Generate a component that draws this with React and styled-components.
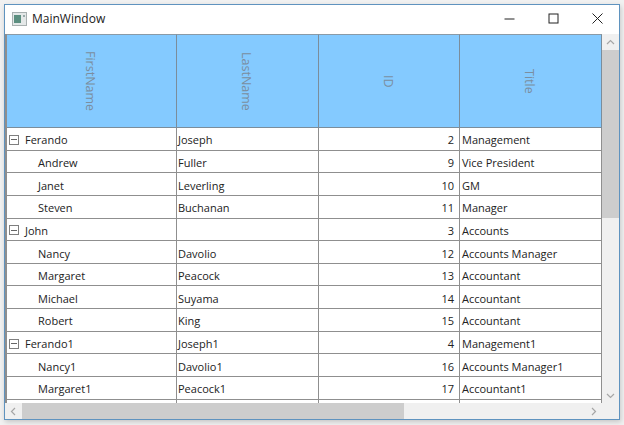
import React from "react";
import styled, { createGlobalStyle } from "styled-components";

const Global = createGlobalStyle`
  html, body { margin: 0; padding: 0; width: 624px; height: 425px; overflow: hidden; background: #f1f1f1; }
  body { font-family: "Open Sans", "Noto Sans", sans-serif; }
`;
const Frame = styled.div`
  width: 624px; height: 425px; box-sizing: border-box; padding: 4px 4px 5px 4px;
`;
const Win = styled.div`
  width: 616px; height: 416px; box-sizing: border-box; border: 1.5px solid #5f93bf;
  background: #fff; display: flex; flex-direction: column; box-shadow: 1px 2px 5px rgba(0,0,0,.18);
`;
const TitleBar = styled.div`
  height: 29px; flex: none; display: flex; align-items: center; padding-left: 7px; padding-bottom: 2px; box-sizing: border-box; background: #fff;
`;
const AppIcon = styled.svg` width: 15px; height: 14px; margin-right: 5px; flex: none; `;
const TitleText = styled.div` font-size: 12px; color: #1a1a1a; flex: 1; `;
const WinBtn = styled.div`
  width: 44px; height: 27px; display: flex; align-items: center; justify-content: center; flex: none;
`;
const Body = styled.div` flex: 1; min-height: 0; display: grid; grid-template-columns: 597px 1fr; grid-template-rows: 1fr 16px; `;
const GridArea = styled.div` overflow: hidden; min-height: 0; border-left: 2px solid #8e8e8e; `;
const Table = styled.div`
  display: grid; grid-template-columns: 170px 142px 141px 142px;
`;
const HeadCell = styled.div`
  height: 94px; box-sizing: border-box; background: #84caff; border-top: 1px solid #8a9aa6; border-right: 1px solid #7b8d9b; border-bottom: 1px solid #7b8d9b;
  display: flex; align-items: center; justify-content: center; padding-right: 2px;
`;
const HeadText = styled.span`
  writing-mode: vertical-rl; font-size: 12.5px; color: #7b8ea0;
`;
const Cell = styled.div`
  height: 22.65px; box-sizing: border-box; border-right: 1px solid #8f8f8f; border-bottom: 1px solid #8f8f8f;
  font-size: 11px; color: #222; display: flex; align-items: center; white-space: nowrap; overflow: hidden;
  padding-top: 2px; background: #fff;
  justify-content: ${p => (p.$right ? "flex-end" : "flex-start")};
  padding-left: ${p => (p.$child ? "31px" : p.$tight ? "1px" : p.$right ? "0" : "2px")};
  padding-right: ${p => (p.$right ? "5px" : "0")};
`;
const Toggle = styled.span`
  width: 10px; height: 10px; box-sizing: border-box; border: 1px solid #7f7f7f; margin-right: 6px; position: relative; flex: none;
  &::after { content: ""; position: absolute; left: 1px; right: 1px; top: 3.5px; height: 1px; background: #666; }
`;
const VBar = styled.div` background: #f0f0f0; display: flex; flex-direction: column; `;
const HBar = styled.div` background: #f0f0f0; display: flex; `;
const Arrow = styled.div` flex: none; width: ${p => p.$w}px; height: ${p => p.$h}px; display: flex; align-items: center; justify-content: center; `;
const Corner = styled.div` background: #f0f0f0; `;
const VThumb = styled.div` height: 168px; background: #cdcdcd; flex: none; `;
const HThumb = styled.div` width: 382px; background: #cdcdcd; flex: none; `;
const Spacer = styled.div` flex: 1; `;

const rows = [
  ["Ferando", "Joseph", 2, "Management", 0],
  ["Andrew", "Fuller", 9, "Vice President", 1],
  ["Janet", "Leverling", 10, "GM", 1],
  ["Steven", "Buchanan", 11, "Manager", 1],
  ["John", "", 3, "Accounts", 0],
  ["Nancy", "Davolio", 12, "Accounts Manager", 1],
  ["Margaret", "Peacock", 13, "Accountant", 1],
  ["Michael", "Suyama", 14, "Accountant", 1],
  ["Robert", "King", 15, "Accountant", 1],
  ["Ferando1", "Joseph1", 4, "Management1", 0],
  ["Nancy1", "Davolio1", 16, "Accounts Manager1", 1],
  ["Margaret1", "Peacock1", 17, "Accountant1", 1],
  ["", "", "", "", 1],
];

const Chev = ({ d }) => (
  <svg width="9" height="9" viewBox="0 0 9 9" fill="none" stroke="#a6a6a6" strokeWidth="1.2"><path d={d} /></svg>
);

export default function App() {
  return (
    <Frame>
      <Global />
      <Win>
        <TitleBar>
          <AppIcon viewBox="0 0 15 14">
            <rect x="0.5" y="0.5" width="14" height="13" fill="#e4e8e8" stroke="#a8b0b0" />
            <rect x="2" y="3" width="7" height="8" fill="#5c8f80" />
            <rect x="11" y="3" width="2" height="2" fill="#9aa" />
          </AppIcon>
          <TitleText>MainWindow</TitleText>
          <WinBtn><svg width="11" height="11" viewBox="0 0 11 11"><path d="M0.5 6H10.5" stroke="#222" strokeWidth="1" /></svg></WinBtn>
          <WinBtn><svg width="11" height="11" viewBox="0 0 11 11" fill="none"><rect x="1" y="1" width="9" height="9" stroke="#222" strokeWidth="1" /></svg></WinBtn>
          <WinBtn><svg width="11" height="11" viewBox="0 0 11 11" fill="none"><path d="M0.5 0.5L10.5 10.5M10.5 0.5L0.5 10.5" stroke="#222" strokeWidth="1" /></svg></WinBtn>
        </TitleBar>
        <Body>
          <GridArea>
            <Table>
              {["FirstName", "LastName", "ID", "Title"].map(h => (
                <HeadCell key={h}><HeadText>{h}</HeadText></HeadCell>
              ))}
              {rows.map((r, i) => (
                <React.Fragment key={i}>
                  <Cell $child={r[4] === 1}>
                    {r[4] === 0 && <Toggle />}
                    {r[0]}
                  </Cell>
                  <Cell $tight>{r[1]}</Cell>
                  <Cell $right>{r[2]}</Cell>
                  <Cell>{r[3]}</Cell>
                </React.Fragment>
              ))}
            </Table>
          </GridArea>
          <VBar>
            <Arrow $w={16} $h={16}><Chev d="M1 6L4.5 2.5L8 6" /></Arrow>
            <VThumb />
            <Spacer />
            <Arrow $w={16} $h={16}><Chev d="M1 3L4.5 6.5L8 3" /></Arrow>
          </VBar>
          <HBar>
            <Arrow $w={17} $h={16}><Chev d="M6 1L2.5 4.5L6 8" /></Arrow>
            <HThumb />
            <Spacer />
            <Arrow $w={17} $h={16}><Chev d="M3 1L6.5 4.5L3 8" /></Arrow>
          </HBar>
          <Corner />
        </Body>
      </Win>
    </Frame>
  );
}
